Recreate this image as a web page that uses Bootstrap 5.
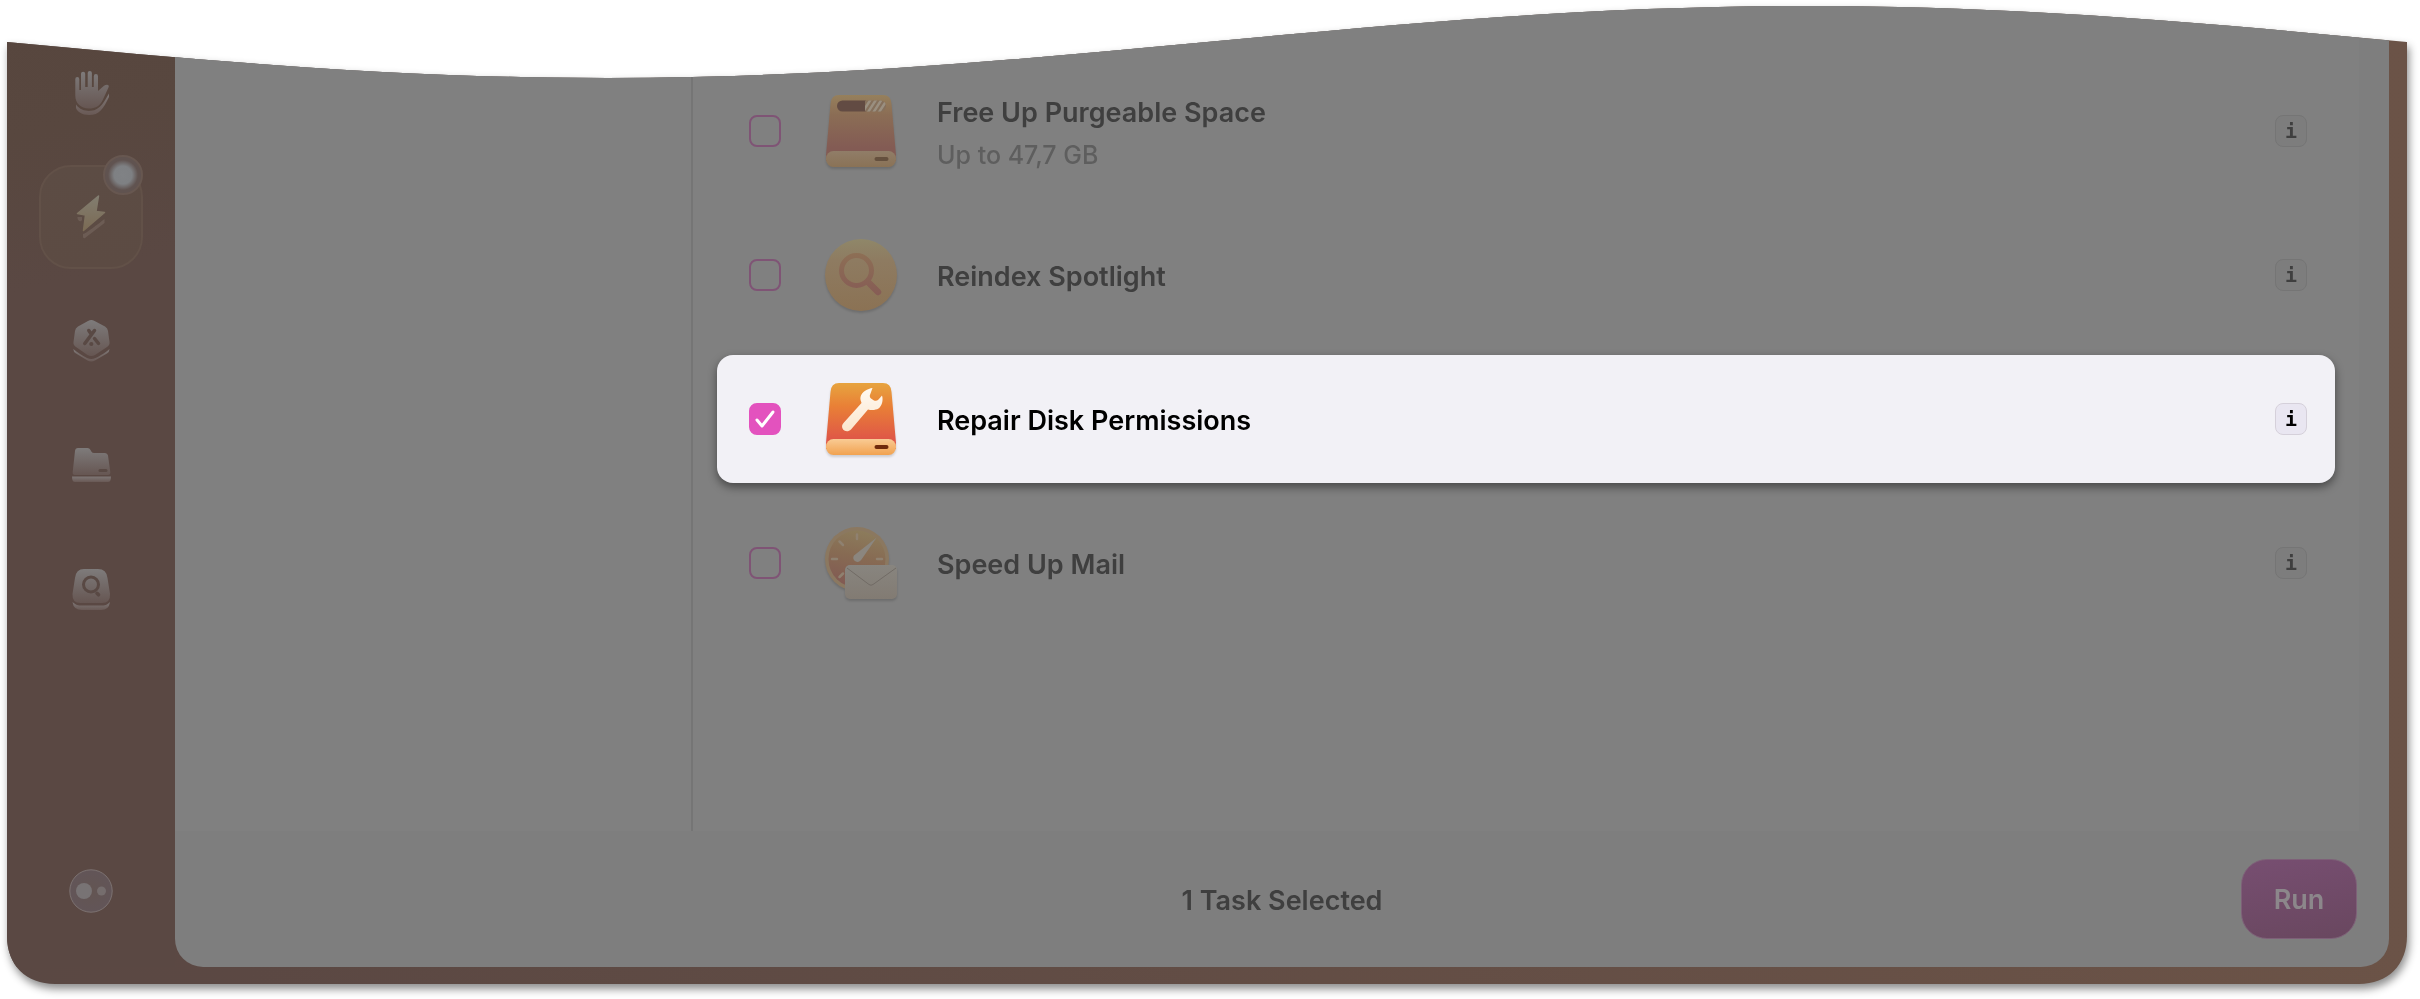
<!DOCTYPE html>
<html lang="en">
<head>
<meta charset="utf-8">
<meta name="viewport" content="width=device-width, initial-scale=1">
<title>Maintenance tasks</title>
<link href="https://cdn.jsdelivr.net/npm/bootstrap@5.3.0/dist/css/bootstrap.min.css" rel="stylesheet">
<style>
  body { background: #fff; font-family: Inter, "Liberation Sans", sans-serif; padding: 6px 13px 15px 7px; color: #3f3f3f; }
  .app-shadow { filter: drop-shadow(2px 5px 4px rgba(0,0,0,.45)); }
  .app-window {
    clip-path: url(#wave);
    background: linear-gradient(90deg, #5a4843 0, #5b4843 10%, #6b5347 100%);
    padding: 0 18px 17px 0;
  }
  .side-nav { width: 168px; padding: 35px 0 54px; background: linear-gradient(165deg, #57463e 0, #58473f 130px, #5a4843 280px); }
  .side-link { width: 104px; height: 104px; border-radius: 32px; position: relative; }
  .side-link.active { background: linear-gradient(#5c4c44, #5c4b43); border: 2px solid #625148; }
  .side-dot { position: absolute; width: 40px; height: 40px; right: -2px; top: -12px; border-radius: 50%; border: 2px solid #675750;
    background: radial-gradient(circle, #808285 0, #7e8083 9px, #605350 15px); }
  .work-area { background: #7e7e7e; border-radius: 0 0 28px 28px; overflow: hidden; }
  .category-pane { width: 518px; background: #808080; border-right: 2px solid #757575; }
  .task-pane { background: #808080; margin-right: 30px; padding: 61px 24px 0; }
  .task-row { min-height: 128px; padding: 0 28px 0 32px; border-radius: 16px; }
  .task-row.picked { background: #f2f1f6; color: #000; box-shadow: 0 4px 10px rgba(0,0,0,.45); }
  .task-check.form-check-input { width: 32px; height: 32px; margin: 0 44px 0 0; border: 2px solid #7f5475; border-radius: 8px; background-color: transparent; flex: none; }
  .task-check.form-check-input:checked { background-color: #e352be; border-color: #e352be; background-size: 32px 32px;
    background-image: url("data:image/svg+xml,%3Csvg xmlns='http://www.w3.org/2000/svg' viewBox='0 0 32 32'%3E%3Cpath d='M8 17l5 6L24 9' fill='none' stroke='%23fff' stroke-width='3' stroke-linecap='round' stroke-linejoin='round'/%3E%3C/svg%3E"); }
  .task-art { width: 72px; height: 72px; overflow: visible; margin-right: 40px; flex: none; filter: drop-shadow(0 2px 1px rgba(0,0,0,.15)); }
  .task-row label, .status-line { padding-top: 3px; }
  .task-name, .status-line { font-size: 27px; line-height: 36px; font-weight: 600; }
  .task-note { font-size: 25px; line-height: 32px; font-weight: 500; color: #5e5e5e; margin-top: 8px; }
  .info-btn { width: 32px; height: 32px; padding: 0; border: 1px solid #757575; border-radius: 8px; background: #7d7d7d; color: #3f3f3f;
    font: bold 20px/30px "DejaVu Sans Mono", monospace; }
  .picked .info-btn { background: #e9e6f1; border-color: #d5d0da; color: #000; }
  .action-bar { min-height: 136px; display: grid; grid-template-columns: 1fr auto 1fr; padding: 0 32px; }
  .run-btn { width: 116px; height: 80px; padding: 2px 0 0; border: 1px solid #7e6078; border-radius: 26px; background: linear-gradient(170deg, #774e71, #69475f); color: #8c878b;
    font-size: 27px; font-weight: 600; justify-self: end; }
</style>
</head>
<body class="d-flex flex-column min-vh-100">
<svg width="0" height="0" class="position-absolute" aria-hidden="true">
  <defs>
    <clipPath id="wave" clipPathUnits="objectBoundingBox">
      <path d="M0 .0368C.0816 .0556 .16 .0736 .25 .0736C.34 .0736 .4184 .0556 .5 .0368C.5816 .018 .66 0 .75 0C.84 0 .9184 .018 1 .0368V.951C1 .981 .992 1 .98 1H.02C.008 1 0 .981 0 .951Z"/>
    </clipPath>
    <linearGradient id="chrome" x1="0" y1="0" x2="0" y2="1"><stop offset="0" stop-color="#7e7b7b"/><stop offset="1" stop-color="#665652"/></linearGradient>
    <linearGradient id="chromeLow" x1="0" y1="0" x2="0" y2="1"><stop offset="0" stop-color="#7e7776"/><stop offset="1" stop-color="#695955"/></linearGradient>
    <linearGradient id="boltFill" x1="0" y1="0" x2="0" y2="1"><stop offset="0" stop-color="#827d70"/><stop offset="1" stop-color="#7b6b54"/></linearGradient>
    <linearGradient id="driveDim" x1="0" y1="0" x2="0" y2="1"><stop offset="0" stop-color="#96805c"/><stop offset=".3" stop-color="#8b6d55"/><stop offset=".8" stop-color="#835b54"/></linearGradient>
    <linearGradient id="baseDim" x1="0" y1="0" x2="0" y2="1"><stop offset="0" stop-color="#907d68"/><stop offset="1" stop-color="#8a7256"/></linearGradient>
    <linearGradient id="coin" x1="0" y1="0" x2="0" y2="1"><stop offset="0" stop-color="#8f8769"/><stop offset=".3" stop-color="#8e7b61"/><stop offset="1" stop-color="#8b7254"/></linearGradient>
    <linearGradient id="lens" gradientUnits="userSpaceOnUse" x1="0" y1="14" x2="0" y2="56"><stop offset="0" stop-color="#8d6f55"/><stop offset="1" stop-color="#865c55"/></linearGradient>
    <linearGradient id="drive" x1="0" y1="0" x2="0" y2="1"><stop offset="0" stop-color="#e7a43f"/><stop offset=".35" stop-color="#e98036"/><stop offset=".85" stop-color="#df5747"/></linearGradient>
    <linearGradient id="base" x1="0" y1="0" x2="0" y2="1"><stop offset="0" stop-color="#f9cb94"/><stop offset="1" stop-color="#f1a250"/></linearGradient>
    <linearGradient id="steel" x1="0" y1="0" x2="0" y2="1"><stop offset="0" stop-color="#fffaf2"/><stop offset="1" stop-color="#fbe5cc"/></linearGradient>
    <linearGradient id="dial" x1=".6" y1="0" x2=".4" y2="1"><stop offset="0" stop-color="#8c7c5c"/><stop offset=".45" stop-color="#876b53"/><stop offset="1" stop-color="#815953"/></linearGradient>
    <linearGradient id="paper" x1="0" y1="0" x2="0" y2="1"><stop offset="0" stop-color="#88857f"/><stop offset="1" stop-color="#827b73"/></linearGradient>
    <radialGradient id="orb"><stop offset="0" stop-color="#635552"/><stop offset="1" stop-color="#625558"/></radialGradient>
    <clipPath id="freeEnd"><path d="M40 5.500H55.500a5.500 5.500 0 0 1 0 11H40Z"/></clipPath>
  </defs>
</svg>

<div class="app-shadow d-flex flex-column flex-grow-1">
  <div class="app-window d-flex flex-grow-1">
    <nav class="side-nav d-flex flex-column align-items-center flex-shrink-0" aria-label="Sections">
      <div class="d-flex flex-column" style="gap:20px">
        <a href="#privacy" class="side-link d-flex align-items-center justify-content-center" aria-label="Privacy">
          <svg width="44" height="44" fill="url(#chrome)"><path d="M6.3 8a2 2 0 0 1 4 0V19H12V2.8a2.1 2.1 0 0 1 4.2 0V16H18.7V2.1a2.1 2.1 0 0 1 4.2 0V16H24.8V5.2a2.1 2.1 0 0 1 4.2 0V20L35 14.800C37.500 13 41 13.500 39.500 16.500L33.500 29.500C30.500 35.500 26 37.500 20 37.500C11.500 37.500 6.300 32 6.300 24.500Z"/><path fill="url(#chromeLow)" d="M7 33.500C11 39 17 40.300 22 39.800C31.500 39 35.500 30 40 22.500V26C34 38 30.500 44 20 44C13 44 8 40.500 7 37Z"/></svg>
        </a>
        <a href="#speed" class="side-link active d-flex align-items-center justify-content-center" aria-label="Speed" aria-current="page">
          <svg width="44" height="44"><path d="M29.500 1L27 16.500L35.500 17.500L14.500 35.500L16.500 20L8.500 18.500Z" fill="url(#boltFill)" stroke="url(#boltFill)" stroke-width="1.500" stroke-linejoin="round"/><path d="M14 39C17 38.500 29 29 35.500 24V28L16 43C15 43.500 14 43 14 42ZM8.500 22H13V25C12 27.500 8.500 26 8.500 23Z" fill="#6c5c54"/></svg>
          <span class="side-dot"></span>
        </a>
        <a href="#apps" class="side-link d-flex align-items-center justify-content-center" aria-label="Applications">
          <svg width="44" height="44"><path d="M19 2Q22.300 0 25.600 2L36 7.500Q38.700 9 39 12L40.500 23Q41 26 38 28L26 36Q22.300 38 18.500 36L7 28Q4 26 4.500 23L6 12Q6.300 9 9 7.500Z" fill="url(#chrome)"/><path d="M4.300 30C8 33 14 37 18 39Q22.300 41 26.500 39C31 37 37 33 40.500 30Q40.500 33 38 34.500L26 41.500Q22.300 43.500 18.500 41.500L7 34.500Q4.300 33 4.300 30Z" fill="url(#chromeLow)"/><path d="M25.500 11.500L15.800 24.500M19.800 11.500L21.500 14M25.500 19.500L29.500 24.500" fill="none" stroke="#594944" stroke-width="3.500" stroke-linecap="round"/><circle cx="22.300" cy="25" r="2.100" fill="#594944"/></svg>
        </a>
        <a href="#files" class="side-link d-flex align-items-center justify-content-center" aria-label="Files">
          <svg width="44" height="44"><path d="M6 8Q6.300 5 9 5H18.500Q20.500 5 21.500 7L22.500 8.700Q23.300 10 25 10H36Q38.500 10 39 12.500L41.300 29Q41.500 32 39 32H6Q3.300 32 3.700 29Z" fill="url(#chrome)"/><path d="M3 33.500H42Q42 39 39 39H6Q3 39 3 33.500Z" fill="url(#chromeLow)"/><rect x="29.500" y="26" width="9" height="3" rx="1.500" fill="#594944"/></svg>
        </a>
        <a href="#lens" class="side-link d-flex align-items-center justify-content-center" aria-label="Space lens">
          <svg width="44" height="44"><path d="M6 11Q7 2 15 2H29Q37.500 2 38.500 11L41 27Q41.500 36 33 36H11.500Q3 36 3.500 27Z" fill="url(#chrome)"/><path d="M3.500 35C7 38 9 38.500 13 38.500H32C36 38.500 38 38 41 35Q40 43 32 43H13Q4.500 43 3.500 35Z" fill="url(#chromeLow)"/><circle cx="22" cy="17.500" r="7.500" fill="none" stroke="#594944" stroke-width="3"/><path d="M28 26.300L29.500 27.800" stroke="#594944" stroke-width="3.500" stroke-linecap="round"/></svg>
        </a>
      </div>
      <a href="#assistant" class="mt-auto d-flex" aria-label="Assistant">
        <svg width="44" height="44"><circle cx="22" cy="22" r="21.200" fill="url(#orb)" stroke="#7c7271" stroke-width="1"/><circle cx="15" cy="22" r="8" fill="#787374"/><circle cx="32.500" cy="22" r="4.500" fill="#756d6d"/></svg>
      </a>
    </nav>

    <main class="work-area d-flex flex-column flex-grow-1">
      <div class="d-flex flex-grow-1">
        <div class="category-pane flex-shrink-0"></div>
        <section class="task-pane d-flex flex-column gap-3 flex-grow-1" aria-label="Tasks">
          <div class="task-row d-flex align-items-center">
            <input class="form-check-input task-check" type="checkbox" id="t1">
            <svg class="task-art" viewBox="0 0 72 72" aria-hidden="true"><path d="M5.500 9Q6 0 14 0H58Q66 0 66.500 9L71 60V66H1V60Z" fill="url(#driveDim)"/><rect x="1" y="56" width="70" height="16" rx="7.500" fill="url(#baseDim)"/><rect x="49.500" y="62" width="14" height="4" rx="2" fill="#65503e"/><path d="M41 5.500H17.500a5.300 5.300 0 0 0 0 11H41Z" fill="#624b43"/><g clip-path="url(#freeEnd)"><path d="M40 5H62V17H40Z" fill="#85705c"/><path d="M37 18L46 4M42.500 18L51.500 4M48 18L57 4M53.500 18L62.500 4" stroke="#9a8f80" stroke-width="2.500"/></g></svg>
            <label class="flex-grow-1" for="t1"><span class="task-name d-block">Free Up Purgeable Space</span><span class="task-note d-block">Up to 47,7 GB</span></label>
            <button type="button" class="info-btn" aria-label="About Free Up Purgeable Space">i</button>
          </div>
          <div class="task-row d-flex align-items-center">
            <input class="form-check-input task-check" type="checkbox" id="t2">
            <svg class="task-art" viewBox="0 0 72 72" aria-hidden="true"><circle cx="36" cy="36" r="36" fill="url(#coin)"/><circle cx="31.500" cy="31.500" r="15" fill="none" stroke="url(#lens)" stroke-width="5"/><path d="M43 43L53 53" stroke="url(#lens)" stroke-width="6.500" stroke-linecap="round"/></svg>
            <label class="task-name flex-grow-1" for="t2">Reindex Spotlight</label>
            <button type="button" class="info-btn" aria-label="About Reindex Spotlight">i</button>
          </div>
          <div class="task-row picked d-flex align-items-center">
            <input class="form-check-input task-check" type="checkbox" id="t3" checked>
            <svg class="task-art" viewBox="0 0 72 72" aria-hidden="true"><path d="M5.500 9Q6 0 14 0H58Q66 0 66.500 9L71 60V66H1V60Z" fill="url(#drive)"/><rect x="1" y="56" width="70" height="16" rx="7.500" fill="url(#base)"/><rect x="49.500" y="62" width="14" height="4" rx="2" fill="#702a0c"/><path d="M47.500 5C43 5.500 36.500 9 35.500 14C35 16.500 36 18 36.500 20L18.500 40C14 45 21 51.500 26 46.500L43 26.500C47 27.500 51 27 53.500 25.500C57 23 58.500 17 57 12.500L53.500 16.500Q51.500 18.500 49 17.500L46 15.500Q44.500 14.500 44.800 12.500Z" fill="url(#steel)"/></svg>
            <label class="task-name flex-grow-1" for="t3">Repair Disk Permissions</label>
            <button type="button" class="info-btn" aria-label="About Repair Disk Permissions">i</button>
          </div>
          <div class="task-row d-flex align-items-center">
            <input class="form-check-input task-check" type="checkbox" id="t4">
            <svg class="task-art" viewBox="0 0 72 72" aria-hidden="true"><circle cx="32" cy="32" r="32" fill="#8b7860"/><circle cx="32" cy="32" r="28.500" fill="url(#dial)"/><path d="M32 7.500V12M14.500 14.500L18 18M7 32H12M52 32H57M14.500 50L18 46.500" stroke="#8f8170" stroke-width="2.500" stroke-linecap="round"/><path d="M51.700 10.500L36.500 32.500C33 38 26 33 29 28.500Z" fill="#8b867f"/><rect x="20" y="38" width="52" height="34" rx="5" fill="url(#paper)"/><path d="M22 41L44 57.500Q46 59 48 57.500L71 41" fill="none" stroke="#716b65" stroke-width="1"/></svg>
            <label class="task-name flex-grow-1" for="t4">Speed Up Mail</label>
            <button type="button" class="info-btn" aria-label="About Speed Up Mail">i</button>
          </div>
        </section>
      </div>
      <footer class="action-bar align-items-center">
        <span></span>
        <span class="status-line">1 Task Selected</span>
        <button type="button" class="run-btn">Run</button>
      </footer>
    </main>
  </div>
</div>
<script src="https://cdn.jsdelivr.net/npm/bootstrap@5.3.0/dist/js/bootstrap.bundle.min.js"></script>
</body>
</html>
